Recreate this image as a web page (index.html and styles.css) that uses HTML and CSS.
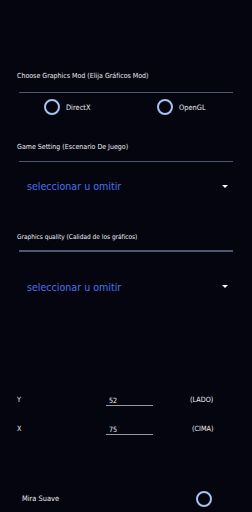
FILE: index.html
```html
<!DOCTYPE html>
<html lang="es">
<head>
  <meta charset="UTF-8">
  <title>Graphics</title>
  <link rel="stylesheet" href="styles.css">
</head>
<body>
  <div id="page">
    <div class="label">Choose Graphics Mod (Elija Gráficos Mod)</div>
    <div class="divider"></div>
    <div class="radio-row">
      <div class="radio-opt"><span class="ring"></span>DirectX</div>
      <div class="radio-opt"><span class="ring"></span>OpenGL</div>
    </div>

    <div class="label label-game">Game Setting (Escenario De Juego)</div>
    <div class="divider divider-game"></div>
    <div class="select"><span>seleccionar u omitir</span><span class="arrow"></span></div>

    <div class="label label-small">Graphics quality (Calidad de los gráficos)</div>
    <div class="divider divider-quality"></div>
    <div class="select select-quality"><span>seleccionar u omitir</span><span class="arrow"></span></div>

    <div class="coord coord-y">
      <span class="axis">Y</span>
      <span class="value">52</span>
      <span class="unit">(LADO)</span>
    </div>
    <div class="coord coord-x">
      <span class="axis">X</span>
      <span class="value">75</span>
      <span class="unit">(CIMA)</span>
    </div>

    <div class="toggle-row">
      <span>Mira Suave</span>
      <span class="ring"></span>
    </div>
  </div>
</body>
</html>
```

FILE: styles.css
```css
* { box-sizing: border-box; }
html, body { margin: 0; height: 100%; }
body { background: #05050f; color: #ececf2; font-family: "DejaVu Sans Condensed", "DejaVu Sans", sans-serif; font-stretch: condensed; overflow: hidden; }
#page { padding: 71px 17px 0 17px; }

.label { font-size: 7px; line-height: 10px; height: 10px; white-space: nowrap; }
.label-game { margin-top: 25px; }
.label-small { font-size: 6.5px; margin-top: 35.5px; }

.divider { height: 1.4px; background: #4f5670; margin: 11px 2px 0 2px; }
.divider-game { margin-top: 8.5px; }
.divider-quality { margin-top: 8.5px; }

.radio-row { display: flex; align-items: center; height: 20px; margin-top: 4px; padding-left: 27px; }
.radio-opt { display: flex; align-items: center; gap: 6px; font-size: 7.4px; }
.radio-opt:first-child { width: 113px; }
.ring { width: 16px; height: 16px; border: 2px solid #a8c2ee; border-radius: 50%; flex: none; }

.select { display: flex; align-items: center; justify-content: space-between; height: 20px; margin-top: 14px; padding: 0 7px 0 10px; color: #4c70ee; font-size: 10.6px; }
.select-quality { margin-top: 25px; }
.arrow { width: 0; height: 0; border-left: 3px solid transparent; border-right: 3px solid transparent; border-top: 3.5px solid #ffffff; }

.coord { display: flex; align-items: center; height: 14px; font-size: 7.2px; }
.coord-y { margin-top: 96px; }
.coord-x { margin-top: 15px; }
.axis { width: 89px; }
.value { width: 47px; padding-left: 3px; border-bottom: 1.5px solid #9a9aa2; line-height: 9px; margin-top: 3px; }
.unit { margin-left: 37px; }
.coord-x .unit { margin-left: 39px; }

.toggle-row { display: flex; align-items: center; justify-content: space-between; height: 20px; margin-top: 53px; padding: 0 23px 0 5px; font-size: 7.4px; }
```
